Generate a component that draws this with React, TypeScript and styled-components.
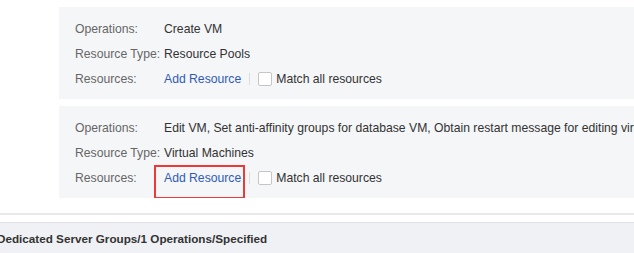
import React from 'react'
import styled, {createGlobalStyle} from "styled-components";

const COLORS = {
    panel: '#f5f6f8',
    label: '#666666',
    value: '#333333',
    link: '#2f5bb7',
    red: '#ec3a3a',
}

const GlobalStyle = createGlobalStyle`
  body {
    margin: 0;
    background: #ffffff;
    font-family: 'Liberation Sans', Arial, sans-serif;
    overflow: hidden;
  }
`

interface Rule {
    operations: string,
    resourceType: string,
    highlight: boolean
}

const RULES: Rule[] = [
    {operations: 'Create VM', resourceType: 'Resource Pools', highlight: false},
    {
        operations: 'Edit VM, Set anti-affinity groups for database VM, Obtain restart message for editing virtual machine',
        resourceType: 'Virtual Machines',
        highlight: true
    },
]

const App = () => {
    return (
        <Page>
            <GlobalStyle/>
            <Panels>
                {RULES.map((rule, i) => (
                    <Panel key={i}>
                        <Row>
                            <Label>Operations:</Label>
                            <Value>{rule.operations}</Value>
                        </Row>
                        <Row>
                            <Label>Resource Type:</Label>
                            <Value>{rule.resourceType}</Value>
                        </Row>
                        <Row>
                            <Label>Resources:</Label>
                            <Link highlight={rule.highlight}>Add Resource</Link>
                            <Divider/>
                            <Check>
                                <Box/>
                                Match all resources
                            </Check>
                        </Row>
                    </Panel>
                ))}
            </Panels>
            <Separator/>
            <GroupBar>
                <GroupTitle>Dedicated Server Groups/1 Operations/Specified</GroupTitle>
            </GroupBar>
        </Page>
    )
}

const Page = styled.div`
  width: 634px;
  height: 253px;
  overflow: hidden;
`

const Panels = styled.div`
  display: flex;
  flex-direction: column;
  gap: 7px;
  padding: 7px 0 0 59px;
`

const Panel = styled.section`
  background: ${COLORS.panel};
  padding: 9px 0 8px 16px;
  white-space: nowrap;
  overflow: hidden;
`

const Row = styled.div`
  display: flex;
  align-items: center;
  height: 25px;
  font-size: 12.2px;
`

const Label = styled.span`
  width: 89px;
  flex: none;
  color: ${COLORS.label};
`

const Value = styled.span`
  color: ${COLORS.value};
`

interface LinkProp {
    highlight: boolean
}

const Link = styled.a<LinkProp>`
  position: relative;
  color: ${COLORS.link};
  cursor: pointer;
  &::after {
    content: '';
    display: ${props => props.highlight ? 'block' : 'none'};
    position: absolute;
    left: -10px;
    right: -4px;
    top: -6px;
    bottom: -14px;
    border: 2px solid ${COLORS.red};
  }
`

const Divider = styled.span`
  width: 1px;
  height: 12px;
  background: #dcdcdc;
  margin: 0 8px 0 8px;
`

const Check = styled.label`
  display: flex;
  align-items: center;
  gap: 4px;
  color: ${COLORS.value};
`

const Box = styled.span`
  width: 12px;
  height: 12px;
  border: 1px solid #c6c6c6;
  border-radius: 2px;
  background: #ffffff;
`

const Separator = styled.div`
  height: 2px;
  background: #e9e9eb;
  margin-top: 15px;
`

const GroupBar = styled.div`
  margin-top: 7px;
  height: 31px;
  border-top: 1px solid #dfe1e6;
  background: #f0f1f5;
  display: flex;
  align-items: center;
`

const GroupTitle = styled.span`
  margin-left: -3px;
  font-size: 11.7px;
  font-weight: bold;
  color: #333333;
  white-space: nowrap;
`

export default App
